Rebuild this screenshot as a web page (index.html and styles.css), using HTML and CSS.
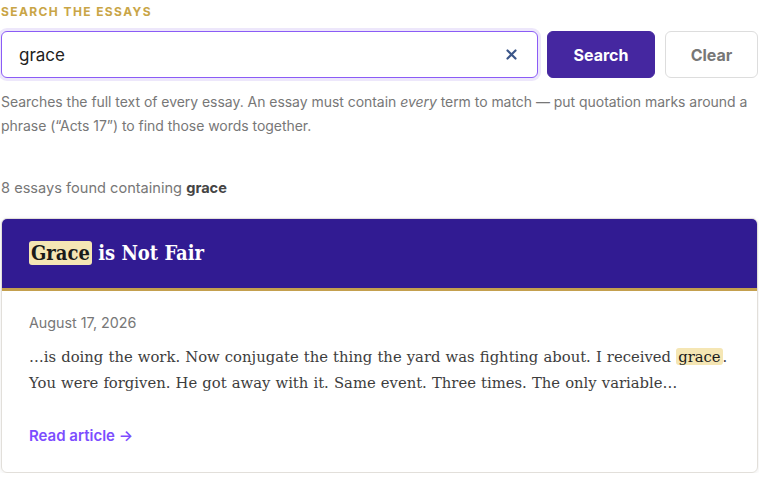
FILE: index.html
```html
<!DOCTYPE html>
<html lang="en">
<head>
    <meta charset="utf-8">
    <meta name="viewport" content="width=device-width, initial-scale=1">
    <title>Search the Essays</title>
    <link rel="stylesheet" href="styles.css">
</head>
<body>
    <div class="search-page">
        <form class="search-form" action="#" method="GET">
            <label class="search-label" for="q">Search the essays</label>
            <div class="search-row">
                <div class="search-field">
                    <input id="q" class="search-input" type="text" name="q" value="grace">
                    <button type="button" class="search-reset" title="Clear text">
                        <svg width="11" height="11" viewBox="0 0 11 11"><path d="M1.5 1.5 L9.5 9.5 M9.5 1.5 L1.5 9.5" stroke="#3b5689" stroke-width="2.2" stroke-linecap="round"/></svg>
                    </button>
                </div>
                <button type="submit" class="btn btn-primary">Search</button>
                <button type="button" class="btn btn-ghost">Clear</button>
            </div>
            <p class="search-help">Searches the full text of every essay. An essay must contain <em>every</em> term to match — put quotation marks around a phrase (“Acts 17”) to find those words together.</p>
        </form>

        <p class="result-count">8 essays found containing <strong>grace</strong></p>

        <article class="essay-card">
            <header class="essay-head">
                <h2 class="essay-title"><mark>Grace</mark> is Not Fair</h2>
            </header>
            <div class="essay-body">
                <div class="essay-date">August 17, 2026</div>
                <p class="essay-excerpt">…is doing the work. Now conjugate the thing the yard was fighting about. I received <mark>grace</mark>. You were forgiven. He got away with it. Same event. Three times. The only variable…</p>
                <a class="essay-link" href="#">Read article →</a>
            </div>
        </article>
    </div>
</body>
</html>
```

FILE: styles.css
```css
body {
    margin: 0;
    font-family: Inter, "Liberation Sans", sans-serif;
    color: #222;
    background: #fff;
}
.search-page {
    padding: 0 1px;
}
.search-label {
    display: block;
    padding-top: 4px;
    font-size: 12px;
    line-height: 15px;
    font-weight: 700;
    letter-spacing: 1.4px;
    text-transform: uppercase;
    color: #c9a546;
}
.search-row {
    display: flex;
    gap: 9px;
    margin-top: 12px;
}
.search-field {
    position: relative;
    flex: 1;
}
.search-input {
    box-sizing: border-box;
    width: 100%;
    height: 47px;
    padding: 0 40px 0 17px;
    font-family: inherit;
    font-size: 17px;
    color: #222;
    border: 1px solid #8b5cf6;
    border-radius: 6px;
    box-shadow: 0 0 0 3px #ede7fb;
    outline: none;
}
.search-reset {
    position: absolute;
    right: 21px;
    top: 18px;
    padding: 0;
    border: none;
    background: none;
    line-height: 0;
    cursor: pointer;
}
.btn {
    height: 47px;
    font-family: inherit;
    font-size: 16px;
    font-weight: 700;
    border-radius: 6px;
    cursor: pointer;
}
.btn-primary {
    width: 108px;
    background: #4527a0;
    color: #fff;
    border: 1px solid #4527a0;
}
.btn-ghost {
    width: 93px;
    margin-left: 1px;
    background: #fff;
    color: #777;
    border: 1px solid #ddd;
}
.search-help {
    margin: 12px 0 0;
    font-size: 14px;
    line-height: 24px;
    letter-spacing: -0.04px;
    color: #777;
}
.result-count {
    margin: 38px 0 0;
    font-size: 14.6px;
    line-height: 24px;
    color: #777;
}
.result-count strong {
    color: #444;
}
.essay-card {
    margin-top: 18px;
    border: 1px solid #e2dfda;
    border-radius: 6px;
    overflow: hidden;
    box-shadow: 0 1px 4px rgba(0, 0, 0, 0.08);
}
.essay-head {
    background: #311b92;
    border-bottom: 3px solid #c4a04e;
    padding: 18px 27px 19px;
}
.essay-title {
    margin: 0;
    font-family: "DejaVu Serif", "Liberation Serif", serif;
    font-stretch: semi-condensed;
    font-size: 20px;
    line-height: 32px;
    color: #fff;
}
mark {
    background: #f5e6b4;
    color: #1a1a1a;
    border-radius: 3px;
    padding: 0 2px;
}
.essay-body {
    padding: 22px 27px 26px;
}
.essay-date {
    font-size: 14.3px;
    line-height: 20px;
    color: #777;
}
.essay-excerpt {
    margin: 11px 0 0;
    font-family: "DejaVu Serif", "Liberation Serif", serif;
    font-size: 14.8px;
    line-height: 26px;
    word-spacing: 0.4px;
    color: #3d3d3d;
}
.essay-link {
    display: inline-block;
    margin-top: 30px;
    font-size: 15px;
    line-height: 20px;
    font-weight: 600;
    color: #7c4dff;
    text-decoration: none;
}
```
